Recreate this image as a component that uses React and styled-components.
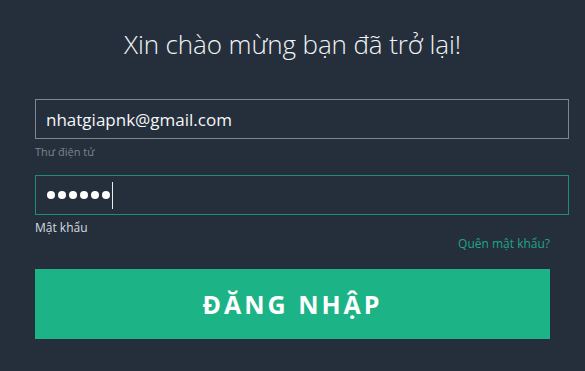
import React from 'react';
import styled, { createGlobalStyle } from 'styled-components';

const GlobalStyle = createGlobalStyle`
  html, body {
    margin: 0;
    padding: 0;
    background: #252f3b;
  }
  body {
    font-family: "Open Sans", "Noto Sans", sans-serif;
  }
`;

const Page = styled.div`
  width: 585px;
  height: 371px;
  background: #252f3b;
  box-sizing: border-box;
  padding: 25px 16px 0 35px;
  overflow: hidden;
`;

const Title = styled.h1`
  margin: 0 0 36px -35px;
  width: 585px;
  text-align: center;
  font-weight: 300;
  font-size: 26px;
  line-height: 38px;
  color: #f1f4f7;
  letter-spacing: -0.1px;
`;

const Field = styled.div`
  display: flex;
  flex-direction: column;
  margin-bottom: ${(p) => p.$gap || 0}px;
`;

const Input = styled.div`
  box-sizing: border-box;
  height: 40px;
  border: 1px solid ${(p) => (p.$focus ? '#1f8d73' : '#7c8792')};
  display: flex;
  align-items: center;
  padding-left: 10px;
  font-size: 17px;
  color: #f4f6f8;
`;

const Label = styled.label`
  margin-top: 6px;
  font-size: ${(p) => (p.$active ? 12 : 11)}px;
  line-height: 14px;
  color: ${(p) => (p.$active ? '#d6dce1' : '#7a8590')};
`;

const Dots = styled.span`
  display: flex;
  gap: 3px;
  margin-left: 1px;
`;

const Dot = styled.span`
  width: 8px;
  height: 8px;
  border-radius: 50%;
  background: #ffffff;
`;

const Caret = styled.span`
  display: inline-block;
  width: 1px;
  height: 27px;
  background: #e8ecef;
  margin-left: 2px;
`;

const Actions = styled.div`
  width: 515px;
  display: flex;
  flex-direction: column;
`;

const Forgot = styled.a`
  align-self: flex-end;
  margin-top: 1px;
  font-size: 12px;
  line-height: 16px;
  color: #1fa585;
  text-decoration: none;
`;

const Button = styled.button`
  margin-top: 17px;
  width: 100%;
  height: 70px;
  border: none;
  background: #1cb386;
  color: #ffffff;
  font-family: "Open Sans", "Noto Sans", sans-serif;
  font-weight: 700;
  font-size: 25px;
  letter-spacing: 3px;
  padding: 0;
`;

export default function App() {
  return (
    <>
      <GlobalStyle />
      <Page>
        <Title>Xin chào mừng bạn đã trở lại!</Title>
        <Field $gap={16}>
          <Input>nhatgiapnk@gmail.com</Input>
          <Label>Thư điện tử</Label>
        </Field>
        <Field>
          <Input $focus>
            <Dots>
              {[0, 1, 2, 3, 4, 5].map((i) => (
                <Dot key={i} />
              ))}
            </Dots>
            <Caret />
          </Input>
          <Label $active>Mật khẩu</Label>
          <Actions>
            <Forgot href="#">Quên mật khẩu?</Forgot>
            <Button>ĐĂNG NHẬP</Button>
          </Actions>
        </Field>
      </Page>
    </>
  );
}
